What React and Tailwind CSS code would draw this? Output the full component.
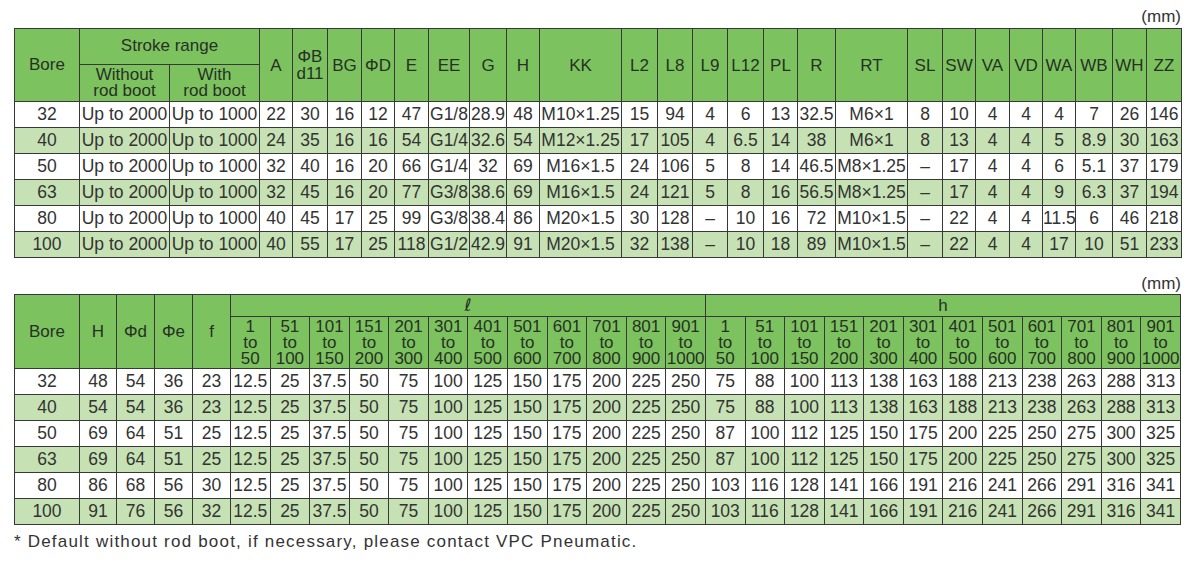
const FONT = { fontFamily: '"Liberation Sans", Arial, sans-serif' };

const TOP_COLS = [65, 90, 90, 33, 35, 34, 33, 34, 41, 37, 33, 82, 36, 35, 35, 36, 34, 38, 72, 35, 33, 34, 33, 33, 37, 34, 35];
const TOP_HEAD = ["A", "ΦB\nd11", "BG", "ΦD", "E", "EE", "G", "H", "KK", "L2", "L8", "L9", "L12", "PL", "R", "RT", "SL", "SW", "VA", "VD", "WA", "WB", "WH", "ZZ"];

const TOP_ROWS = [
  ["32", "Up to 2000", "Up to 1000", "22", "30", "16", "12", "47", "G1/8", "28.9", "48", "M10×1.25", "15", "94", "4", "6", "13", "32.5", "M6×1", "8", "10", "4", "4", "4", "7", "26", "146"],
  ["40", "Up to 2000", "Up to 1000", "24", "35", "16", "16", "54", "G1/4", "32.6", "54", "M12×1.25", "17", "105", "4", "6.5", "14", "38", "M6×1", "8", "13", "4", "4", "5", "8.9", "30", "163"],
  ["50", "Up to 2000", "Up to 1000", "32", "40", "16", "20", "66", "G1/4", "32", "69", "M16×1.5", "24", "106", "5", "8", "14", "46.5", "M8×1.25", "–", "17", "4", "4", "6", "5.1", "37", "179"],
  ["63", "Up to 2000", "Up to 1000", "32", "45", "16", "20", "77", "G3/8", "38.6", "69", "M16×1.5", "24", "121", "5", "8", "16", "56.5", "M8×1.25", "–", "17", "4", "4", "9", "6.3", "37", "194"],
  ["80", "Up to 2000", "Up to 1000", "40", "45", "17", "25", "99", "G3/8", "38.4", "86", "M20×1.5", "30", "128", "–", "10", "16", "72", "M10×1.5", "–", "22", "4", "4", "11.5", "6", "46", "218"],
  ["100", "Up to 2000", "Up to 1000", "40", "55", "17", "25", "118", "G1/2", "42.9", "91", "M20×1.5", "32", "138", "–", "10", "18", "89", "M10×1.5", "–", "22", "4", "4", "17", "10", "51", "233"],
];

const RANGES = [["1", "50"], ["51", "100"], ["101", "150"], ["151", "200"], ["201", "300"], ["301", "400"], ["401", "500"], ["501", "600"], ["601", "700"], ["701", "800"], ["801", "900"], ["901", "1000"]];
const L_VALS = ["12.5", "25", "37.5", "50", "75", "100", "125", "150", "175", "200", "225", "250"];
const H_A = ["75", "88", "100", "113", "138", "163", "188", "213", "238", "263", "288", "313"];
const H_B = ["87", "100", "112", "125", "150", "175", "200", "225", "250", "275", "300", "325"];
const H_C = ["103", "116", "128", "141", "166", "191", "216", "241", "266", "291", "316", "341"];

const BOTTOM_ROWS = [
  ["32", "48", "54", "36", "23", ...L_VALS, ...H_A],
  ["40", "54", "54", "36", "23", ...L_VALS, ...H_A],
  ["50", "69", "64", "51", "25", ...L_VALS, ...H_B],
  ["63", "69", "64", "51", "25", ...L_VALS, ...H_B],
  ["80", "86", "68", "56", "30", ...L_VALS, ...H_C],
  ["100", "91", "76", "56", "32", ...L_VALS, ...H_C],
];

const CELL = "border border-[#383838] text-center align-middle p-0 whitespace-nowrap";
const HEAD = `${CELL} bg-[#7cc35f] text-[#283026] text-[17px] font-normal`;
const rowBg = (i) => (i % 2 === 1 ? "bg-[#c6e2b4]" : "bg-white");

function Mm() {
  return <div className="text-right pr-[19px] text-[17px] leading-[20px] text-[#333]">(mm)</div>;
}

export default function App() {
  return (
    <div className="w-[1200px] h-[562px] bg-white overflow-hidden" style={FONT}>
      <div className="pt-[7px]"><Mm /></div>

      <table className="ml-[14px] w-[1167px] table-fixed border-collapse text-[#333] mt-px">
        <colgroup>
          {TOP_COLS.map((w, i) => <col key={i} style={{ width: w }} />)}
        </colgroup>
        <thead>
          <tr className="h-[36px]">
            <th rowSpan={2} className={HEAD}>Bore</th>
            <th colSpan={2} className={`${HEAD} pb-[2px]`}>Stroke range</th>
            {TOP_HEAD.map((h) => (
              <th key={h} rowSpan={2} className={`${HEAD} leading-[17px] whitespace-pre-line`}>{h}</th>
            ))}
          </tr>
          <tr className="h-[37px]">
            <th className={`${HEAD} text-[16px] leading-[16px]`}>Without<br />rod boot</th>
            <th className={`${HEAD} text-[16px] leading-[16px]`}>With<br />rod boot</th>
          </tr>
        </thead>
        <tbody>
          {TOP_ROWS.map((row, i) => (
            <tr key={i} className={`h-[26px] ${rowBg(i)}`}>
              {row.map((v, j) => (
                <td key={j} className={`${CELL} text-[17.5px] leading-none`}>{v}</td>
              ))}
            </tr>
          ))}
        </tbody>
      </table>

      <div className="mt-[16px]"><Mm /></div>

      <table className="ml-[14px] w-[1167px] table-fixed border-collapse text-[#333]">
        <colgroup>
          <col style={{ width: 65 }} />
          <col style={{ width: 37 }} />
          <col style={{ width: 38 }} />
          <col style={{ width: 38 }} />
          <col style={{ width: 38 }} />
          {Array.from({ length: 24 }).map((_, i) => <col key={i} />)}
        </colgroup>
        <thead>
          <tr className="h-[22px]">
            <th rowSpan={2} className={HEAD}>Bore</th>
            <th rowSpan={2} className={HEAD}>H</th>
            <th rowSpan={2} className={HEAD}>Φd</th>
            <th rowSpan={2} className={HEAD}>Φe</th>
            <th rowSpan={2} className={HEAD}>f</th>
            <th colSpan={12} className={`${HEAD} leading-none`}>
              <span className="italic text-[17px]" style={{ fontFamily: '"DejaVu Sans", sans-serif' }}>ℓ</span>
            </th>
            <th colSpan={12} className={`${HEAD} leading-none`}>h</th>
          </tr>
          <tr className="h-[52px]">
            {[...RANGES, ...RANGES].map(([a, b], i) => (
              <th key={i} className={`${HEAD} text-[16px] leading-[16px]`}>
                {a}<br />to<br />{b}
              </th>
            ))}
          </tr>
        </thead>
        <tbody>
          {BOTTOM_ROWS.map((row, i) => (
            <tr key={i} className={`h-[26px] ${rowBg(i)}`}>
              {row.map((v, j) => (
                <td key={j} className={`${CELL} text-[17.5px] leading-none`}>{v}</td>
              ))}
            </tr>
          ))}
        </tbody>
      </table>

      <p className="ml-[14px] mt-[7px] text-[17px] leading-[20px] tracking-[1.2px] text-[#333]">
        * Default without rod boot, if necessary, please contact VPC Pneumatic.
      </p>
    </div>
  );
}
